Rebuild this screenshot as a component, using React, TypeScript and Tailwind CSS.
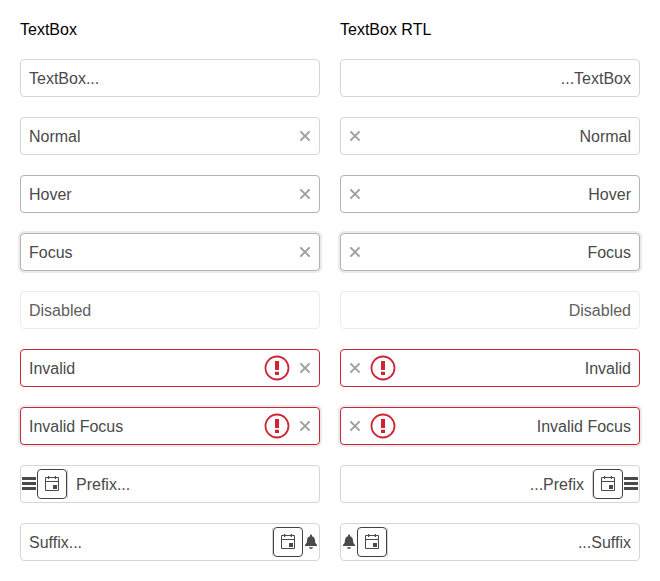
import type { ReactNode } from 'react';

function ClearIcon() {
  return (
    <span className="flex w-7 shrink-0 items-center justify-center text-[#424242] opacity-50">
      <svg viewBox="0 0 16 16" className="size-4" fill="none" stroke="currentColor" strokeWidth="2">
        <path d="M3.4 3.4 12.6 12.6M12.6 3.4 3.4 12.6" />
      </svg>
    </span>
  );
}

function InvalidIcon() {
  return (
    <svg viewBox="0 0 26 26" className="me-px size-[26px] shrink-0 text-[#ce2434]" fill="currentColor">
      <circle cx="13" cy="13" r="11.5" fill="none" stroke="currentColor" strokeWidth="1.8" />
      <path d="M11 6h4v9h-4zM11 16.700h4v3.400h-4z" />
    </svg>
  );
}

function MenuIcon() {
  return (
    <svg viewBox="0 0 16 16" className="size-4 shrink-0" fill="currentColor">
      <path d="M1 1h14v3H1zM1 6h14v3H1zM1 11h14v3H1z" />
    </svg>
  );
}

function BellIcon() {
  return (
    <svg viewBox="0 0 16 16" className="size-4 shrink-0" fill="currentColor">
      <path d="M8 .5c.6 0 1 .4 1 1 0 .3 0 .5-.1.700C11 2.700 12 4.300 12 6.300c0 2.200.7 3.700 2 4.500V12H2v-1.200c1.300-.8 2-2.300 2-4.500 0-2 1-3.600 3.100-4.100C7 2 7 1.800 7 1.500c0-.6.4-1 1-1zM6 13.200h4c-.1 1.100-.9 1.700-2 1.700s-1.900-.6-2-1.700z" />
    </svg>
  );
}

function CalendarButton() {
  return (
    <button className="flex size-[30px] shrink-0 items-center justify-center rounded-[4px] border border-[#424242] bg-white">
      <svg viewBox="0 0 16 16" className="size-4 shrink-0">
        <path d="M1.500 1.500h13v13h-13zM1.500 5.500h13" fill="none" stroke="currentColor" />
        <path d="M4 0h1.200v3H4zM10.800 0H12v3h-1.200zM9 9h4v4H9z" fill="currentColor" />
      </svg>
    </button>
  );
}

function Separator() {
  return <span className="h-[28px] w-px shrink-0 bg-[#d5d5d5]" />;
}

const looks = {
  normal: 'border-[#d5d5d5] text-[#4a4a4a]',
  hover: 'border-[#b3b3b3] text-[#4a4a4a]',
  focus: 'border-[#b3b3b3] text-[#4a4a4a] shadow-[0_0_0_2px_#ebebeb]',
  disabled: 'border-[#ececec] text-[#606060]',
  invalid: 'border-[#ce2434] text-[#4a4a4a]',
  invalidFocus: 'border-[#ce2434] text-[#4a4a4a] shadow-[0_0_0_2px_#ebebeb]',
};

type FieldProps = {
  text: string;
  look?: keyof typeof looks;
  before?: ReactNode;
  after?: ReactNode;
};

function Field({ text, look = 'normal', before, after }: FieldProps) {
  return (
    <div className={`flex h-[38px] items-center rounded-[4px] border bg-white ${looks[look]}`}>
      {before}
      <span className="min-w-0 flex-1 px-2 pt-0.5 leading-6">{text}</span>
      {after}
    </div>
  );
}

function Column({ title, dir }: { title: string; dir: 'ltr' | 'rtl' }) {
  const invalidTools = (
    <>
      <InvalidIcon />
      <ClearIcon />
    </>
  );
  return (
    <section dir={dir} className="flex w-[300px] flex-col gap-5">
      <h2 dir="ltr" className="text-left leading-[19px] text-black">{title}</h2>
      <Field text="TextBox..." />
      <Field text="Normal" after={<ClearIcon />} />
      <Field text="Hover" look="hover" after={<ClearIcon />} />
      <Field text="Focus" look="focus" after={<ClearIcon />} />
      <Field text="Disabled" look="disabled" />
      <Field text="Invalid" look="invalid" after={invalidTools} />
      <Field text="Invalid Focus" look="invalidFocus" after={invalidTools} />
      <Field
        text="Prefix..."
        before={
          <>
            <MenuIcon />
            <CalendarButton />
            <Separator />
          </>
        }
      />
      <Field
        text="Suffix..."
        after={
          <>
            <Separator />
            <CalendarButton />
            <BellIcon />
          </>
        }
      />
    </section>
  );
}

export default function App() {
  return (
    <main className="flex h-[581px] w-[660px] gap-5 bg-white p-5 font-['Liberation_Sans',Arial,sans-serif] text-base">
      <Column title="TextBox" dir="ltr" />
      <Column title="TextBox RTL" dir="rtl" />
    </main>
  );
}
